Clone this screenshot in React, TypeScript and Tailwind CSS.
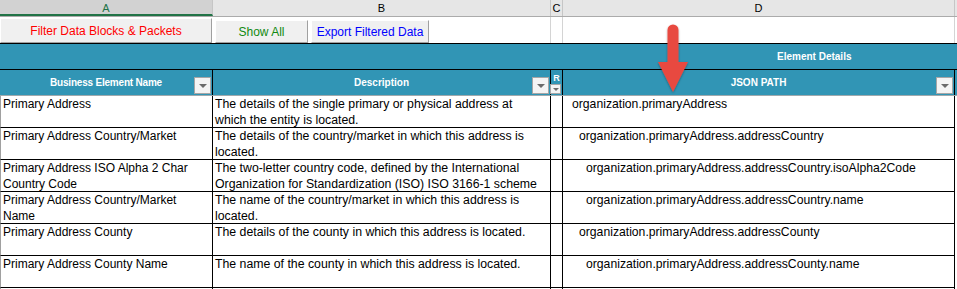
import React from 'react';

type Row = {
  name: string[];
  desc: string[];
  path: string;
  level: 1 | 2 | 3;
};

const rows: Row[] = [
  {
    name: ['Primary Address'],
    desc: ['The details of the single primary or physical address at', 'which the entity is located.'],
    path: 'organization.primaryAddress',
    level: 1,
  },
  {
    name: ['Primary Address Country/Market'],
    desc: ['The details of the country/market in which this address is', 'located.'],
    path: 'organization.primaryAddress.addressCountry',
    level: 2,
  },
  {
    name: ['Primary Address ISO Alpha 2 Char', 'Country Code'],
    desc: ['The two-letter country code, defined by the International', 'Organization for Standardization (ISO) ISO 3166-1 scheme'],
    path: 'organization.primaryAddress.addressCountry.isoAlpha2Code',
    level: 3,
  },
  {
    name: ['Primary Address Country/Market', 'Name'],
    desc: ['The name of the country/market in which this address is', 'located.'],
    path: 'organization.primaryAddress.addressCountry.name',
    level: 3,
  },
  {
    name: ['Primary Address County'],
    desc: ['The details of the county in which this address is located.'],
    path: 'organization.primaryAddress.addressCounty',
    level: 2,
  },
  {
    name: ['Primary Address County Name'],
    desc: ['The name of the county in which this address is located.'],
    path: 'organization.primaryAddress.addressCounty.name',
    level: 3,
  },
];

// indent per nesting level of the json path
const indent = {
  1: 'pl-[9px]',
  2: 'pl-[16px]',
  3: 'pl-[23px]',
};

const FilterButton = ({ small }: { small?: boolean }) => (
  <div
    className={`absolute right-[1px] bottom-[1px] flex items-center justify-center bg-[#f4f4f4] border border-[#a6a6a6] ${
      small ? 'w-[11px] h-[10px]' : 'w-[17px] h-[17px]'
    }`}
  >
    <svg width={small ? 6 : 8} height={small ? 3 : 4} viewBox="0 0 8 4">
      <polygon points="0,0 8,0 4,4" fill="#6b6b6b" />
    </svg>
  </div>
);

const Lines = ({ items }: { items: string[] }) => (
  <>
    {items.map((l, i) => (
      <div key={i} className="whitespace-nowrap">
        {l}
      </div>
    ))}
  </>
);

export default function App() {
  return (
    <div className="relative w-[957px] h-[289px] overflow-hidden bg-white font-['Liberation_Sans',Arial,sans-serif] text-black">
      {/* column letters */}
      <div className="flex h-[17px] bg-[#e6e6e6] border-b border-[#ababab] text-[11px] leading-[16px]">
        <div className="w-[213px] bg-[#d2d2d2] border-r border-[#c6c6c6] border-b-2 border-b-[#217346] text-center text-[#217346]">
          A
        </div>
        <div className="w-[338px] border-r border-[#c6c6c6] text-center">B</div>
        <div className="w-[12px] border-r border-[#c6c6c6] text-center">C</div>
        <div className="w-[392px] border-r border-[#c6c6c6] text-center">D</div>
        <div className="flex-1" />
      </div>

      {/* button row */}
      <div className="flex h-[26px] text-[12px]">
        <div className="w-[213px] pt-[1px]">
          <button className="w-[212px] h-[25px] bg-[#f0f0f0] border border-t-white border-l-white border-r-[#a0a0a0] border-b-[#a0a0a0] text-[#ff0000]">
            Filter Data Blocks &amp; Packets
          </button>
        </div>
        <div className="w-[338px] flex items-end gap-[3px] pl-[2px] border-r border-[#d4d4d4]">
          <button className="w-[93px] h-[23px] bg-[#f0f0f0] border border-t-white border-l-white border-r-[#a0a0a0] border-b-[#a0a0a0] text-[#118a11]">
            Show All
          </button>
          <button className="w-[118px] h-[23px] bg-[#f0f0f0] border border-t-white border-l-white border-r-[#a0a0a0] border-b-[#a0a0a0] text-[#0000ff]">
            Export Filtered Data
          </button>
        </div>
        <div className="w-[12px] border-r border-[#d4d4d4]" />
        <div className="w-[392px] border-r border-[#d4d4d4]" />
        <div className="flex-1" />
      </div>

      {/* merged teal band */}
      <div className="flex h-[27px] bg-[#3195b5] border-y border-black text-white font-bold text-[10px] leading-[25px]">
        <div className="w-[777px]" />
        <div>Element Details</div>
      </div>

      {/* table header */}
      <div className="flex h-[26px] bg-[#3195b5] border-b border-[#9fa9ad] text-white font-bold text-[10px]">
        <div className="relative w-[213px] border-r border-black flex items-center justify-center tracking-[-0.2px]">
          Business Element Name
          <FilterButton />
        </div>
        <div className="relative w-[338px] border-r border-black flex items-center justify-center">
          Description
          <FilterButton />
        </div>
        <div className="relative w-[12px] border-r border-black text-center text-[9px] leading-[12px] pt-[2px]">
          R
          <FilterButton small />
        </div>
        <div className="relative w-[392px] border-r border-black flex items-center justify-center">
          JSON PATH
          <FilterButton />
        </div>
        <div className="flex-1" />
      </div>

      {/* data rows */}
      {rows.map((r, i) => (
        <div key={i} className="flex h-[32px] leading-[15.5px]">
          <div className="w-[213px] border-l border-l-[#a0a0a0] border-r border-b border-black pl-[2px] pt-[1px] text-[12px]">
            <Lines items={r.name} />
          </div>
          <div className="w-[338px] border-r border-b border-black pl-[2px] pt-[1px] text-[12.3px]">
            <Lines items={r.desc} />
          </div>
          <div className="w-[12px] border-r border-b border-black" />
          <div className={`w-[392px] border-r border-b border-black pt-[1px] text-[12.2px] ${indent[r.level]}`}>
            <div className="whitespace-nowrap">{r.path}</div>
          </div>
          <div className="flex-1" />
        </div>
      ))}
      <div className="flex h-[10px]">
        <div className="w-[213px] border-l border-l-[#a0a0a0] border-r border-black" />
        <div className="w-[338px] border-r border-black" />
        <div className="w-[12px] border-r border-black" />
        <div className="w-[392px] border-r border-black" />
      </div>

      {/* annotation arrow */}
      <svg className="absolute left-[652px] top-[20px]" width="42" height="78" viewBox="0 0 42 78">
        <defs>
          <filter id="sh" x="-30%" y="-10%" width="160%" height="130%">
            <feGaussianBlur in="SourceAlpha" stdDeviation="1.2" />
            <feOffset dx="0" dy="1" />
            <feComponentTransfer>
              <feFuncA type="linear" slope="0.35" />
            </feComponentTransfer>
            <feMerge>
              <feMergeNode />
              <feMergeNode in="SourceGraphic" />
            </feMerge>
          </filter>
        </defs>
        <g filter="url(#sh)" fill="#e84a40">
          <path d="M15.5 10 a5.5 5.5 0 0 1 11 0 V43 H15.5 Z" />
          <polygon points="6,42 36,42 21,72" />
        </g>
      </svg>
    </div>
  );
}
